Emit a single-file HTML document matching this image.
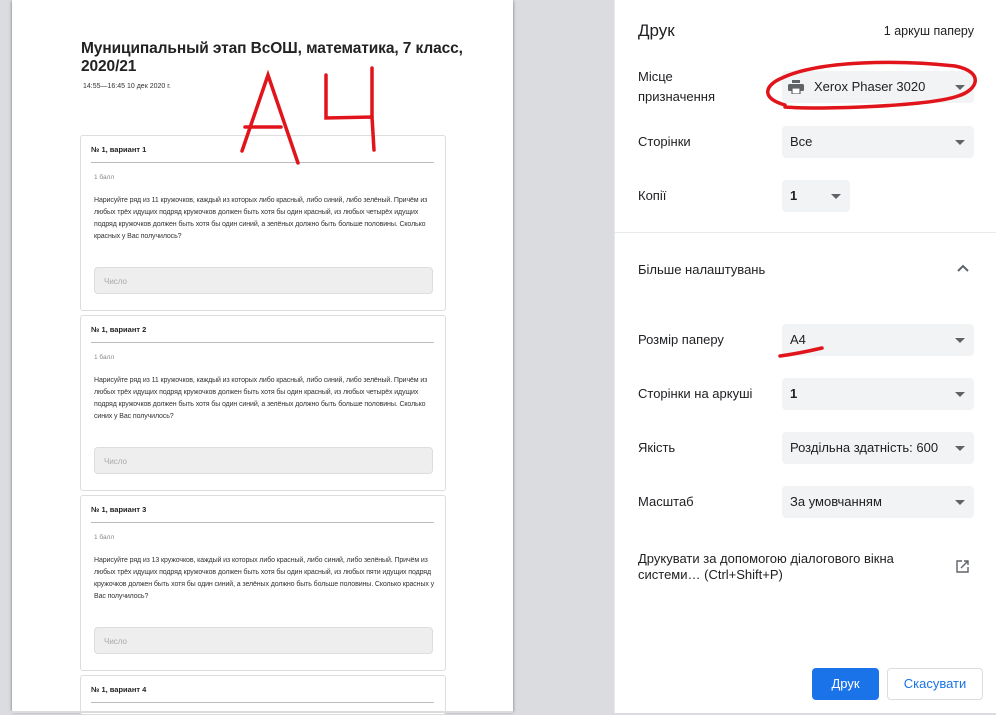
<!DOCTYPE html>
<html><head><meta charset="utf-8"><style>
*{margin:0;padding:0;box-sizing:border-box}
body{width:996px;height:713px;overflow:hidden;background:#dadce0;font-family:"Liberation Sans",sans-serif;position:relative}
.page{position:absolute;left:12px;top:0;width:501px;height:711px;background:#fff;box-shadow:0 1px 3px rgba(0,0,0,.5)}
.abs{position:absolute}
h1{position:absolute;left:81px;top:40px;font-size:15.5px;line-height:18px;color:#222;font-weight:bold;width:430px;letter-spacing:-0.1px}
.card{position:absolute;left:80px;width:366px;height:176px;border:1px solid #ddd;border-radius:3px;background:#fff}
.card .t{position:absolute;left:10px;top:9px;font-size:7.5px;font-weight:bold;color:#222}
.card .sep{position:absolute;left:10px;right:11px;top:26px;border-top:1px solid #bbb}
.card .b{position:absolute;left:13px;top:38px;font-size:6.5px;color:#888}
.card .q{position:absolute;left:13px;top:59px;width:342px;font-size:7px;line-height:12px;color:#333;letter-spacing:-0.1px}
.card .in{position:absolute;left:13px;top:131px;width:339px;height:27px;background:#eee;border:1px solid #ddd;border-radius:4px;font-size:8px;color:#aaa;padding:9px 9px}
.panel{position:absolute;left:614px;top:0;width:382px;height:713px;background:#fff;border-left:1px solid #e8e8e8}
.lbl{position:absolute;left:23px;font-size:13px;color:#202124;line-height:20px}
.sel{position:absolute;left:167px;width:192px;height:32px;background:#f1f3f4;border-radius:4px;font-size:13px;color:#202124;padding:8px 8px}
.sel:after{content:"";position:absolute;right:9px;top:14px;border-left:5px solid transparent;border-right:5px solid transparent;border-top:5px solid #5f6368}
</style></head><body>
<div class="page"></div>
<h1>Муниципальный этап ВсОШ, математика, 7 класс,<br>2020/21</h1>
<div class="abs" style="left:83px;top:83px;font-size:7px;color:#333">14:55—16:45 10 дек 2020 г.</div>

<div class="card" style="top:135px"><div class="t">№ 1, вариант 1</div><div class="sep"></div><div class="b">1 балл</div><div class="q">Нарисуйте ряд из 11 кружочков, каждый из которых либо красный, либо синий, либо зелёный. Причём из любых трёх идущих подряд кружочков должен быть хотя бы один красный, из любых четырёх идущих подряд кружочков должен быть хотя бы один синий, а зелёных должно быть больше половины. Сколько красных у Вас получилось?</div><div class="in">Число</div></div>
<div class="card" style="top:315px"><div class="t">№ 1, вариант 2</div><div class="sep"></div><div class="b">1 балл</div><div class="q">Нарисуйте ряд из 11 кружочков, каждый из которых либо красный, либо синий, либо зелёный. Причём из любых трёх идущих подряд кружочков должен быть хотя бы один красный, из любых четырёх идущих подряд кружочков должен быть хотя бы один синий, а зелёных должно быть больше половины. Сколько синих у Вас получилось?</div><div class="in">Число</div></div>
<div class="card" style="top:495px"><div class="t">№ 1, вариант 3</div><div class="sep"></div><div class="b">1 балл</div><div class="q">Нарисуйте ряд из 13 кружочков, каждый из которых либо красный, либо синий, либо зелёный. Причём из любых трёх идущих подряд кружочков должен быть хотя бы один красный, из любых пяти идущих подряд кружочков должен быть хотя бы один синий, а зелёных должно быть больше половины. Сколько красных у Вас получилось?</div><div class="in">Число</div></div>
<div class="card" style="top:675px;height:40px"><div class="t">№ 1, вариант 4</div><div class="sep"></div></div>
<div class="abs" style="left:0;top:711px;width:513px;height:2px;background:#dadce0"></div>

<div class="panel">
<div class="abs" style="left:23px;top:21px;font-size:17px;color:#202124">Друк</div>
<div class="abs" style="right:22px;top:24px;font-size:12.5px;color:#202124">1 аркуш паперу</div>
<div class="lbl" style="top:67px">Місце<br>призначення</div>
<div class="sel" style="top:71px;padding-left:32px">Xerox Phaser 3020
<svg class="abs" style="left:6px;top:9px" width="16" height="14" viewBox="0 0 16 14"><rect x="4" y="0" width="8" height="3" fill="#5f6368"/><rect x="0" y="4" width="16" height="7" rx="1.5" fill="#5f6368"/><rect x="4" y="8" width="8" height="6" fill="#fff" stroke="#5f6368" stroke-width="1.2"/></svg></div>
<div class="lbl" style="top:132px">Сторінки</div>
<div class="sel" style="top:126px">Все</div>
<div class="lbl" style="top:186px">Копії</div>
<div class="sel" style="top:180px;width:68px;font-weight:bold">1</div>
<div class="abs" style="left:0;top:232px;width:382px;border-top:1px solid #e8eaed"></div>
<div class="lbl" style="top:260px">Більше налаштувань</div>
<svg class="abs" style="left:342px;top:264px" width="12" height="8"><path d="M1 7L6 2L11 7" stroke="#5f6368" stroke-width="2" fill="none"/></svg>
<div class="lbl" style="top:330px">Розмір паперу</div>
<div class="sel" style="top:324px">A4</div>
<div class="lbl" style="top:384px">Сторінки на аркуші</div>
<div class="sel" style="top:378px;font-weight:bold">1</div>
<div class="lbl" style="top:438px">Якість</div>
<div class="sel" style="top:432px">Роздільна здатність: 600</div>
<div class="lbl" style="top:492px">Масштаб</div>
<div class="sel" style="top:486px">За умовчанням</div>
<div class="lbl" style="top:551px;line-height:16px">Друкувати за допомогою діалогового вікна<br>системи… (Ctrl+Shift+P)</div>
<svg class="abs" style="left:341px;top:560px" width="13" height="13" viewBox="0 0 13 13"><path d="M6 1H1V12H12V7M8 1H12V5M12 1L5 8" stroke="#5f6368" stroke-width="1.4" fill="none"/></svg>
<div class="abs" style="left:197px;top:668px;width:67px;height:32px;background:#1a73e8;border-radius:4px;color:#fff;font-size:13px;text-align:center;line-height:32px">Друк</div>
<div class="abs" style="left:272px;top:668px;width:96px;height:32px;border:1px solid #dadce0;border-radius:4px;color:#1a73e8;font-size:13px;text-align:center;line-height:30px">Скасувати</div>
</div>

<svg class="abs" style="left:0;top:0" width="996" height="713">
<g stroke="#e0141a" stroke-width="3.5" fill="none" stroke-linecap="round">
<path d="M242 151L268 75L298 163"/><path d="M245 127L281 127"/>
<path d="M326 75L326 118L372 117L374 150"/><path d="M372 68L372 117"/>
<path d="M785 105C760 98 765 85 782 78C820 60 900 60 955 66C985 72 978 90 958 96C930 106 820 110 785 107"/>
<path d="M780 356C795 354 805 352 822 348"/>
</g></svg>
</body></html>
